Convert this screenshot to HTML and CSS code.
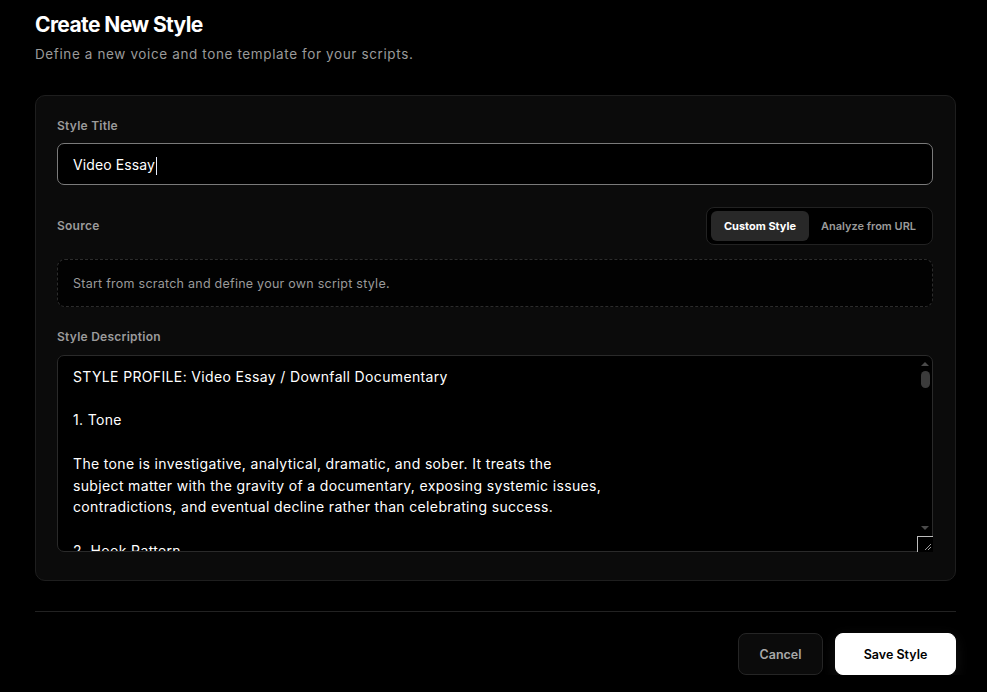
FILE: index.html
```html
<!DOCTYPE html>
<html lang="en">
<head>
<meta charset="utf-8">
<title>Create New Style</title>
<link rel="stylesheet" href="styles.css">
</head>
<body>
<main class="page">
  <header class="head">
    <h1 class="title">Create New Style</h1>
    <p class="subtitle">Define a new voice and tone template for your scripts.</p>
  </header>

  <section class="card">
    <label class="label">Style Title</label>
    <div class="input"><span class="input-text">Video Essay</span><span class="caret"></span></div>

    <div class="source-row">
      <span class="label label-inline">Source</span>
      <div class="toggle">
        <button class="toggle-btn active">Custom Style</button>
        <button class="toggle-btn">Analyze from URL</button>
      </div>
    </div>

    <div class="hint">Start from scratch and define your own script style.</div>

    <label class="label label-desc">Style Description</label>
    <div class="textarea-wrap">
      <textarea class="textarea" spellcheck="false">STYLE PROFILE: Video Essay / Downfall Documentary

1. Tone

The tone is investigative, analytical, dramatic, and sober. It treats the
subject matter with the gravity of a documentary, exposing systemic issues,
contradictions, and eventual decline rather than celebrating success.

2. Hook Pattern

The opening lines establish a sense of mystery or contradiction.</textarea>
      <div class="scrollbar" aria-hidden="true">
        <span class="arrow arrow-up"></span>
        <span class="thumb"></span>
        <span class="arrow arrow-down"></span>
      </div>
      <div class="resizer" aria-hidden="true">
        <svg width="7" height="7" viewBox="0 0 7 7"><path d="M1 7 L7 1 M4 7 L7 4" stroke="#9a9a9a" stroke-width="1"/></svg>
      </div>
    </div>
  </section>

  <footer class="footer">
    <button class="btn btn-cancel">Cancel</button>
    <button class="btn btn-save">Save Style</button>
  </footer>
</main>
</body>
</html>
```

FILE: styles.css
```css
* { box-sizing: border-box; }

html, body {
  margin: 0;
  background: #000;
}

body {
  font-family: "Inter", "Liberation Sans", sans-serif;
  color: #fff;
}

.page {
  padding: 11px 31px 0 35px;
  width: 987px;
}

.head {
  display: flex;
  flex-direction: column;
  gap: 5px;
}

.title {
  margin: 0;
  font-size: 21px;
  line-height: 28px;
  font-weight: 700;
  letter-spacing: -0.6px;
  color: #fff;
}

.subtitle {
  margin: 0;
  font-size: 13.5px;
  line-height: 20px;
  color: #9a9a9a;
  letter-spacing: 0.62px;
}

.card {
  margin-top: 31px;
  width: 921px;
  background: #0b0b0b;
  border: 1px solid #1e1e1e;
  border-radius: 10px;
  padding: 21px 22px 28px 21px;
  display: flex;
  flex-direction: column;
}

.label {
  display: block;
  font-size: 12px;
  line-height: 18px;
  font-weight: 600;
  color: #9b9b9b;
  letter-spacing: 0.25px;
  margin-bottom: 8px;
}

.label-inline { margin-bottom: 0; }
.label-desc { margin-bottom: 9px; }

.input {
  height: 42px;
  border: 1px solid #7a7a7a;
  border-radius: 7px;
  background: #000;
  display: flex;
  align-items: center;
  padding: 0 15px;
  font-size: 14px;
  letter-spacing: 0.1px;
  color: #fff;
}

.caret {
  display: inline-block;
  width: 1px;
  height: 18px;
  background: #e8eeff;
  margin-left: 1px;
  transform: translateY(2px);
}

.source-row {
  margin-top: 22px;
  display: flex;
  align-items: center;
  justify-content: space-between;
  height: 38px;
}

.toggle {
  height: 38px;
  width: 227px;
  display: flex;
  align-items: center;
  padding: 3px 4px;
  background: #000;
  border: 1px solid #222;
  border-radius: 8px;
}

.toggle-btn {
  font-family: inherit;
  border: 0;
  background: transparent;
  color: #9a9a9a;
  font-size: 11px;
  font-weight: 600;
  letter-spacing: 0;
  height: 30px;
  padding: 0;
  flex: 1;
  border-radius: 6px;
  cursor: pointer;
}

.toggle-btn.active {
  background: #282828;
  color: #fff;
  font-weight: 700;
  flex: 0 0 98px;
}

.hint {
  margin-top: 14px;
  height: 48px;
  border: 1px dashed #2c2c2c;
  border-radius: 8px;
  background: #020202;
  display: flex;
  align-items: center;
  padding: 0 15px;
  font-size: 12.5px;
  letter-spacing: 0.25px;
  color: #9a9a9a;
  margin-bottom: 21px;
}

.textarea-wrap {
  position: relative;
  height: 197px;
}

.textarea {
  display: block;
  width: 100%;
  height: 197px;
  margin: 0;
  padding: 10px 30px 10px 15px;
  background: #000;
  color: #fff;
  border: 1px solid #2a2a2a;
  border-radius: 7px;
  font-family: inherit;
  font-size: 14px;
  letter-spacing: 0.35px;
  line-height: 21.7px;
  resize: none;
  outline: none;
  overflow: hidden;
}

.scrollbar {
  position: absolute;
  top: 1px;
  right: 1px;
  width: 14px;
  height: 180px;
  display: flex;
  flex-direction: column;
  align-items: center;
}

.arrow {
  width: 0;
  height: 0;
  border-left: 4px solid transparent;
  border-right: 4px solid transparent;
}

.arrow-up {
  margin-top: 6px;
  border-bottom: 4px solid #4a4a4a;
}

.arrow-down {
  margin-top: auto;
  margin-bottom: 6px;
  border-top: 4px solid #4a4a4a;
}

.thumb {
  margin-top: 5px;
  width: 9px;
  height: 17px;
  border-radius: 5px;
  background: #3b3b3b;
}

.resizer {
  position: absolute;
  right: 0;
  bottom: 0;
  width: 16px;
  height: 16px;
  border: 1px solid #bdbdbd;
  border-right: 0;
  border-bottom: 0;
  background: #000;
  display: flex;
  align-items: flex-end;
  justify-content: flex-end;
  padding: 0 2px 2px 0;
}

.footer {
  margin-top: 30px;
  width: 921px;
  border-top: 1px solid #222;
  padding-top: 21px;
  display: flex;
  justify-content: flex-end;
  gap: 12px;
}

.btn {
  font-family: inherit;
  height: 42px;
  border-radius: 8px;
  font-size: 12.5px;
  font-weight: 600;
  cursor: pointer;
}

.btn-cancel {
  width: 85px;
  background: #0b0b0b;
  border: 1px solid #252525;
  color: #a8a8a8;
}

.btn-save {
  width: 121px;
  background: #fff;
  border: 1px solid #fff;
  color: #000;
  box-shadow: 0 4px 14px rgba(255,255,255,0.08);
}
```
